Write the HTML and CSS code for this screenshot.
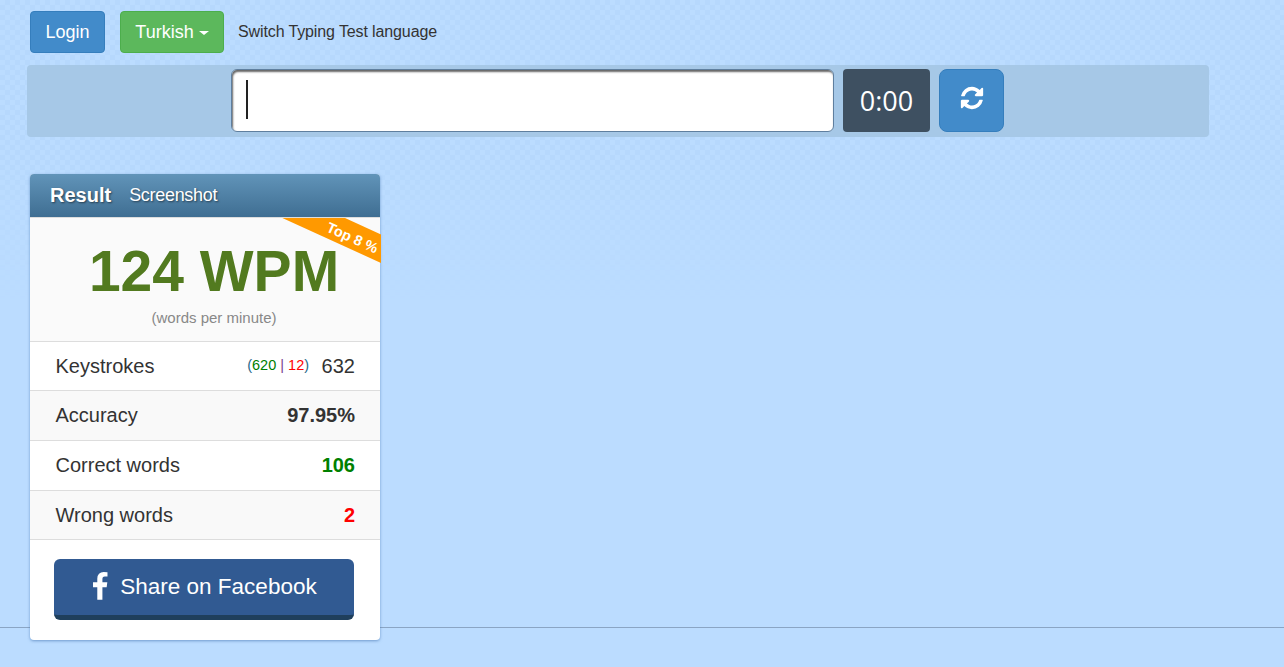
FILE: index.html
```html
<!DOCTYPE html>
<html lang="en">
<head>
  <meta charset="UTF-8">
  <meta name="viewport" content="width=device-width, initial-scale=1.0">
  <title>Typing Test</title>
  <link rel="stylesheet" href="styles.css">
</head>
<body>
  <!-- top bar -->
  <div class="top-row">
    <a class="btn btn-blue btn-login">Login</a>
    <a class="btn btn-green btn-lang">Turkish <span class="caret"></span></a>
    <span class="lang-note">Switch Typing Test language</span>
  </div>

  <!-- typing row -->
  <div class="input-row">
    <div class="word-input"><span class="cursor"></span></div>
    <div class="timer">0:00</div>
    <a class="btn btn-blue btn-reload">
      <svg class="reload-icon" viewBox="0 0 1792 1792"><path fill="#fff" d="M1639 1056q0 5-1 7-64 268-268 434.500t-478 166.500q-146 0-282.500-55t-243.500-157l-129 129q-19 19-45 19t-45-19-19-45v-448q0-26 19-45t45-19h448q26 0 45 19t19 45-19 45l-137 137q71 66 161 102t187 36q134 0 250-65t186-179q11-17 53-117 8-23 30-23h192q13 0 22.500 9.500t9.500 22.500zm25-800v448q0 26-19 45t-45 19h-448q-26 0-45-19t-19-45 19-45l138-138q-148-137-349-137-134 0-250 65t-186 179q-11 17-53 117-8 23-30 23h-199q-13 0-22.500-9.500t-9.500-22.500v-7q65-268 270-434.500t480-166.500q146 0 284 55.500t245 156.500l130-129q19-19 45-19t45 19 19 45z"/></svg>
    </a>
  </div>

  <div class="content">
    <div class="result-card">
      <div class="result-head">
        <strong>Result</strong>
        <span>Screenshot</span>
      </div>
      <div class="wpm-box">
        <div class="ribbon">Top 8 %</div>
        <div class="wpm">124 WPM</div>
        <div class="wpm-note">(words per minute)</div>
      </div>
      <div class="stat-row stat-short">
        <span>Keystrokes</span>
        <span class="stat-value"><small class="keys">(<span class="ok">620</span> <span class="sep">|</span> <span class="bad">12</span>)</small> 632</span>
      </div>
      <div class="stat-row stat-alt">
        <span>Accuracy</span>
        <strong>97.95%</strong>
      </div>
      <div class="stat-row">
        <span>Correct words</span>
        <strong class="green">106</strong>
      </div>
      <div class="stat-row stat-alt stat-short">
        <span>Wrong words</span>
        <strong class="red">2</strong>
      </div>
      <div class="share-box">
        <a class="fb-btn">
          <svg class="fb-icon" viewBox="0 0 1792 1792"><path fill="#fff" d="M1343 12v264h-157q-86 0-116 36t-30 108v189h293l-39 296h-254v759h-306v-759h-255v-296h255v-218q0-186 104-288.500t277-102.500q147 0 228 12z"/></svg>
          Share on Facebook
        </a>
      </div>
    </div>
  </div>

  <div class="foot-line"></div>
</body>
</html>
```

FILE: styles.css
```css
html, body {
  height: 100%;
}

body {
  margin: 0;
  font-family: "Liberation Sans", Arial, sans-serif;
  color: #333;
  background-color: #bbdcff;
  overflow: hidden;
  position: relative;
}

/* faint checker at the top of the page, gone by the middle */
body::before {
  content: "";
  position: absolute;
  top: 0;
  left: 0;
  right: 0;
  height: 300px;
  background-image: conic-gradient(#b6d8fd 25%, transparent 0 50%, #b6d8fd 0 75%, transparent 0);
  background-size: 10px 10px;
  -webkit-mask-image: linear-gradient(#000 55%, transparent);
  mask-image: linear-gradient(#000 55%, transparent);
}

.top-row {
  position: relative;
  display: flex;
  align-items: center;
  padding: 11px 0 0 30px;
  height: 42px;
}

.btn {
  display: flex;
  align-items: center;
  justify-content: center;
  box-sizing: border-box;
  color: #fff;
  font-size: 18px;
  border: 1px solid transparent;
  border-radius: 4px;
}

.btn-blue {
  background-color: #428bca;
  border-color: #357ebd;
}

.btn-green {
  background-color: #5cb85c;
  border-color: #4cae4c;
}

.btn-login {
  width: 75px;
  height: 42px;
}

.btn-lang {
  width: 104px;
  height: 42px;
  margin-left: 15px;
}

.caret {
  display: inline-block;
  margin-left: 5px;
  margin-top: 2px;
  border-top: 4px solid #fff;
  border-left: 5px solid transparent;
  border-right: 5px solid transparent;
}

.lang-note {
  margin-left: 14px;
  font-size: 16px;
  letter-spacing: -0.12px;
}

.input-row {
  position: relative;
  display: flex;
  box-sizing: border-box;
  width: 1182px;
  height: 72px;
  margin: 12px 0 0 27px;
  padding: 4px 0 0 204px;
  background-color: #a6c8e7;
  border-radius: 4px;
}

.word-input {
  box-sizing: border-box;
  width: 603px;
  height: 63px;
  padding: 10px 0 0 14px;
  background-color: #fff;
  border: 1px solid #5f7f9f;
  border-radius: 6px;
  box-shadow: inset 1px 2px 2px #666;
}

.cursor {
  display: block;
  width: 2px;
  height: 39px;
  background-color: #222;
}

.timer {
  display: flex;
  align-items: center;
  justify-content: center;
  width: 87px;
  height: 63px;
  margin-left: 9px;
  color: #fff;
  font-family: "Open Sans", sans-serif;
  font-size: 27px;
  background-color: #3e5061;
  border-radius: 4px;
}

.btn-reload {
  width: 65px;
  height: 63px;
  margin-left: 9px;
  border-radius: 8px;
  padding-bottom: 6px;
}

.reload-icon {
  width: 26px;
  height: 26px;
}

.content {
  position: relative;
  padding: 37px 0 0 30px;
}

.result-card {
  position: relative;
  z-index: 1;
  width: 350px;
  background-color: #fff;
  border-radius: 4px;
  box-shadow: 0 1px 3px rgba(60, 110, 170, 0.6);
}

.result-head {
  display: flex;
  align-items: center;
  height: 43px;
  padding: 0 0 0 20px;
  color: #fff;
  background: linear-gradient(#6194b9, #3f6e92);
  border-bottom: 1px solid #ddd;
  border-radius: 4px 4px 0 0;
  text-shadow: 1px 1px 2px rgba(0, 0, 0, 0.5);
}

.result-head strong {
  font-size: 20px;
}

.result-head span {
  margin-left: 18px;
  font-size: 18px;
  letter-spacing: -0.3px;
}

.wpm-box {
  position: relative;
  height: 123px;
  overflow: hidden;
  margin-right: -1px;
  padding-left: 17px;
  text-align: center;
  background: linear-gradient(to right, #fafafa 350px, transparent 350px);
}

.ribbon {
  position: absolute;
  top: 4px;
  right: -50px;
  box-sizing: border-box;
  width: 160px;
  height: 26px;
  padding-left: 5px;
  color: #fff;
  font-size: 14.5px;
  font-weight: bold;
  line-height: 30px;
  text-align: center;
  background-color: #ff9900;
  transform: rotate(24.5deg);
}

.wpm {
  padding-top: 20px;
  color: #527a1f;
  font-size: 57px;
  font-weight: bold;
  line-height: 67px;
}

.wpm-note {
  margin-top: 4px;
  color: #888;
  font-size: 15px;
}

.stat-row {
  display: flex;
  align-items: center;
  justify-content: space-between;
  box-sizing: border-box;
  height: 50px;
  padding: 0 25px 0 25.5px;
  font-size: 20px;
  border-top: 1px solid #ddd;
}

.stat-short {
  height: 49px;
}

.stat-alt {
  background-color: #f9f9f9;
}

.keys {
  margin-right: 7px;
  color: #2a6a8a;
  font-size: 14.5px;
  vertical-align: 3px;
}

.ok,
.green {
  color: #008000;
}

.bad,
.red {
  color: #ff0000;
}

.sep {
  color: #7a3f8f;
}

.share-box {
  padding: 19px 26px 20px 24px;
  border-top: 1px solid #ddd;
}

.fb-btn {
  display: flex;
  align-items: center;
  justify-content: center;
  box-sizing: border-box;
  height: 61px;
  padding-right: 6px;
  color: #fff;
  font-size: 22.5px;
  background-color: #315a92;
  border-bottom: 5px solid #1f3f5c;
  border-radius: 6px;
}

.fb-icon {
  width: 30px;
  height: 30px;
  margin-right: 5px;
}

.foot-line {
  position: absolute;
  top: 627px;
  left: 0;
  right: 0;
  height: 1px;
  background-color: #8aa5c4;
}
```
